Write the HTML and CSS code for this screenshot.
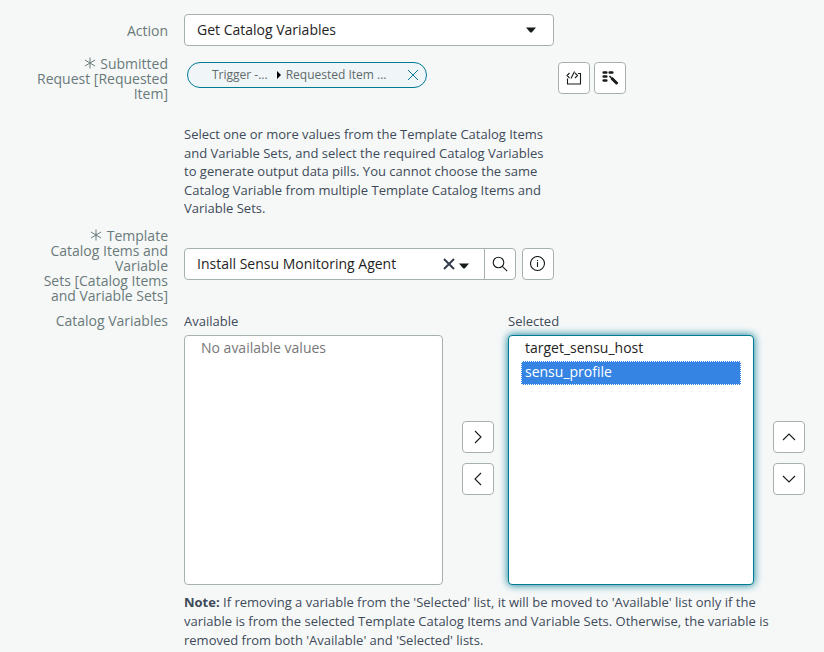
FILE: index.html
```html
<!DOCTYPE html>
<html lang="en">
<head>
<meta charset="utf-8">
<title>Get Catalog Variables</title>
<link rel="stylesheet" href="styles.css">
</head>
<body>
<form class="form">
  <div class="row row-action">
    <label class="label" for="action">Action</label>
    <div class="select-wrap">
      <select class="control" id="action"><option>Get Catalog Variables</option></select>
      <svg class="caret" viewBox="0 0 10 6" aria-hidden="true"><path d="M0 0.500h10L5.700 5.500h-1.400z"/></svg>
    </div>
  </div>

  <div class="row row-request">
    <span class="label"><svg class="star" viewBox="0 0 12 12" aria-hidden="true"><path d="M6 0.500v11M1 3l10 6M11 3L1 9"/></svg> Submitted<br>Request [Requested<br>Item]</span>
    <div class="pill">
      <span class="pill-text">Trigger -...</span>
      <svg class="pill-arrow" viewBox="0 0 4 8" aria-hidden="true"><path d="M0 0l4 4-4 4z"/></svg>
      <span class="pill-text">Requested Item ...</span>
      <button class="pill-remove" type="button" aria-label="Remove"><svg viewBox="0 0 12 12"><path d="M1 1l10 10M11 1L1 11"/></svg></button>
    </div>
    <div class="tools">
      <button class="btn" type="button" aria-label="Toggle script"><svg class="icon" viewBox="0 0 16 16"><path d="M1.500 8.500v5.500h13V3.500h-2.500M3.500 3L1 5.500 3.500 8M8.500 1.500L5 8.500M9 3l2.500 2.500L9 8"/></svg></button>
      <button class="btn" type="button" aria-label="Data pill picker"><svg class="icon" viewBox="0 0 16 16"><path class="bars" d="M1.700 2.500h2.600M7.700 2.500h2.600M1.700 6.500h2.600M1.700 10.500h2.600"/><path class="wand" d="M10.200 8.700l4.300 4.300"/><path class="tip" d="M7.500 6l1.800 1.800"/></svg></button>
    </div>
  </div>

  <div class="row row-help">
    <p class="help">Select one or more values from the Template Catalog Items and Variable Sets, and select the required Catalog Variables to generate output data pills. You cannot choose the same Catalog Variable from multiple Template Catalog Items and Variable Sets.</p>
  </div>

  <div class="row row-template">
    <label class="label" for="template"><svg class="star" viewBox="0 0 12 12" aria-hidden="true"><path d="M6 0.500v11M1 3l10 6M11 3L1 9"/></svg> Template<br>Catalog Items and<br>Variable<br>Sets [Catalog Items<br>and Variable Sets]</label>
    <div class="reference">
      <div class="lookup">
        <input class="lookup-input" id="template" type="text" value="Install Sensu Monitoring Agent">
        <button class="lookup-clear" type="button" aria-label="Clear"><svg viewBox="0 0 12 12"><path d="M1 1l10 10M11 1L1 11"/></svg></button>
        <button class="lookup-open" type="button" aria-label="Show options"><svg viewBox="0 0 10 6"><path d="M0 0.500h10L5.700 5.500h-1.400z"/></svg></button>
        <button class="lookup-search" type="button" aria-label="Search"><svg class="icon" viewBox="0 0 16 16"><circle cx="6.500" cy="6.500" r="5.300"/><path d="M10.300 10.300l4.900 4.900"/></svg></button>
      </div>
      <button class="btn" type="button" aria-label="Information"><svg class="icon" viewBox="0 0 16 16"><circle cx="7.500" cy="7.500" r="7"/><path d="M7.500 6v5M7.500 4v1"/></svg></button>
    </div>
  </div>

  <div class="row row-lists">
    <span class="label">Catalog Variables</span>
    <div class="lists">
      <label class="list-title" for="available">Available</label>
      <label class="list-title list-title-selected" for="selected">Selected</label>
      <select class="list list-available" id="available" multiple><option class="empty" disabled>No available values</option></select>
      <div class="moves moves-across">
        <button class="btn" type="button" aria-label="Add"><svg class="icon" viewBox="0 0 16 16"><path d="M5 2l6 6-6 6"/></svg></button>
        <button class="btn" type="button" aria-label="Remove"><svg class="icon" viewBox="0 0 16 16"><path d="M11 2L5 8l6 6"/></svg></button>
      </div>
      <select class="list list-selected" id="selected" multiple><option>target_sensu_host</option><option selected>sensu_profile</option></select>
      <div class="moves moves-order">
        <button class="btn" type="button" aria-label="Move up"><svg class="icon" viewBox="0 0 16 16"><path d="M2 11l6-6 6 6"/></svg></button>
        <button class="btn" type="button" aria-label="Move down"><svg class="icon" viewBox="0 0 16 16"><path d="M2 5l6 6 6-6"/></svg></button>
      </div>
      <p class="note"><strong>Note:</strong> If removing a variable from the 'Selected' list, it will be moved to 'Available' list only if the variable is from the selected Template Catalog Items and Variable Sets. Otherwise, the variable is removed from both 'Available' and 'Selected' lists.</p>
    </div>
  </div>
</form>
</body>
</html>
```
FILE: styles.css
```css
* { box-sizing: border-box; }

body {
  margin: 0;
  background: #f6f8f8;
  color: #404a59;
  font: 13px/1.43 "Open Sans", "Noto Sans", sans-serif;
}

button, input, select { margin: 0; font: inherit; color: #1f2424; }
p { margin: 0; }
svg { display: block; fill: none; stroke: #161b1c; }

.form { padding: 14px 19px 0 0; }

.row {
  display: grid;
  grid-template-columns: 184px minmax(0, 370fr) minmax(0, 251fr);
}

.label {
  padding-right: 16px;
  color: #6a7a7a;
  font-size: 14px;
  line-height: 15px;
  text-align: right;
}
.star {
  display: inline-block;
  width: 12px;
  height: 12px;
  margin-right: 1px;
  stroke: #6a7a7a;
}

.select-wrap { display: grid; align-items: center; }
.select-wrap > * { grid-area: 1 / 1; }
.control {
  width: 100%;
  height: 32px;
  padding: 0 12px;
  appearance: none;
  background: #fff;
  border: 1px solid #a7b0b0;
  border-radius: 4px;
  font-size: 14px;
}
.caret {
  justify-self: end;
  width: 10px;
  height: 6px;
  margin-right: 18px;
  fill: #161b1c;
  stroke: none;
  pointer-events: none;
}
.row-action .label { padding-top: 9px; }

.row-request { margin-top: 10px; }
.pill {
  display: flex;
  align-items: center;
  justify-self: start;
  width: 240px;
  height: 26px;
  margin: 6px 0 0 3px;
  padding: 0 7px 0 24px;
  background: #f0f5f7;
  border: 1px solid #007b94;
  border-radius: 13px;
}
.pill-text { color: #5f6b6b; font-size: 12px; }
.pill-arrow {
  width: 4px;
  height: 8px;
  margin: 0 5px 0 9px;
  fill: #000;
  stroke: none;
}
.pill-remove {
  margin-left: auto;
  padding: 0;
  border: 0;
  background: none;
}
.pill-remove svg { width: 12px; height: 12px; stroke: #007b94; }
.tools { display: flex; gap: 4px; margin: 6px 0 0 4px; }

.btn {
  display: grid;
  place-items: center;
  flex: none;
  width: 32px;
  height: 32px;
  padding: 0;
  background: #fff;
  border: 1px solid #a7b0b0;
  border-radius: 4px;
}
.icon { width: 16px; height: 16px; stroke-width: 1.1; }
.bars { stroke-width: 2.6; stroke-linecap: round; }
.wand { stroke-width: 3; stroke-linecap: round; }
.tip { stroke-width: 1.6; }

.row-help { margin-top: 24px; }
.help { grid-column: 2; }

.row-template { margin-top: 10px; }
.reference { display: flex; gap: 6px; padding-top: 20px; }
.lookup {
  display: flex;
  align-items: center;
  flex: 1;
  min-width: 0;
  height: 32px;
  background: #fff;
  border: 1px solid #a7b0b0;
  border-radius: 4px;
}
.lookup-input {
  flex: 1;
  min-width: 0;
  padding: 0 12px;
  border: 0;
  background: none;
  font-size: 14px;
}
.lookup button { padding: 0; border: 0; background: none; }
.lookup-clear svg { width: 12px; height: 12px; stroke: #333b4d; stroke-width: 2; }
.lookup .lookup-open { margin: 4px 15px 0 4px; }
.lookup-open svg { width: 10px; height: 6px; fill: #161b1c; stroke: none; }
.lookup .lookup-search {
  display: grid;
  place-items: center;
  width: 31px;
  height: 30px;
  border-left: 1px solid #a7b0b0;
}

.row-lists { margin-top: 9px; grid-template-columns: 184px minmax(0, 1fr); }
.row-lists .label { padding-top: 1px; }
.lists {
  display: grid;
  grid-template-columns: minmax(0, 259fr) 65px minmax(0, 246fr) 51px;
}
.list-title { grid-column: 1; padding-bottom: 5px; }
.list-title-selected { grid-column: 3; }
.list-available { grid-column: 1; }
.list {
  height: 250px;
  padding: 1px 12px;
  background: #fff;
  border: 1px solid #a7b0b0;
  border-radius: 4px;
  outline: 0;
  overflow: hidden;
  font-size: 14px;
}
.list option { min-height: 24px; padding: 0 3px; border: 1px solid transparent; line-height: 22px; }
.list .empty { -webkit-text-fill-color: #777; }
.list-selected { border-color: #007b94; box-shadow: 0 0 8px #007b94; }
.list-selected option:checked {
  background: linear-gradient(#3584e4, #3584e4);
  border: 1px dotted #fff;
  -webkit-text-fill-color: #fff;
}
.moves {
  display: flex;
  flex-direction: column;
  justify-content: center;
  gap: 10px;
  padding: 0 0 4px 19px;
}
.note { grid-column: 1 / -1; margin-top: 8px; }
```
